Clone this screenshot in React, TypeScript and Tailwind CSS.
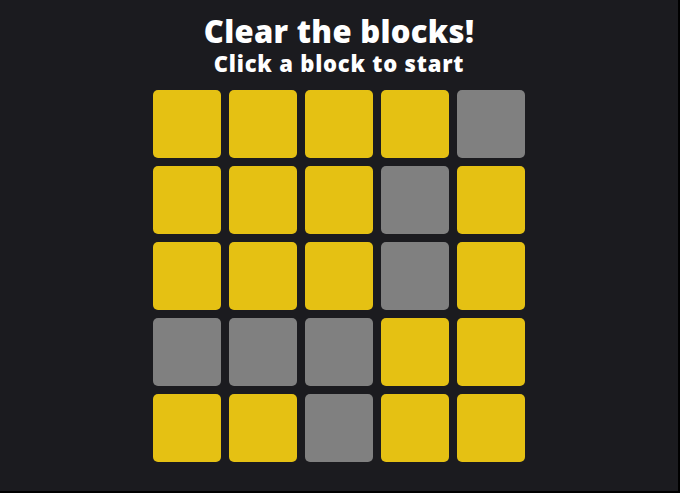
const GRID = [
  'YYYYG',
  'YYYGY',
  'YYYGY',
  'GGGYY',
  'YYGYY',
];

export default function App() {
  return (
    <div className="bg-black w-[680px] h-[493px]">
      <div
        className="w-[678px] h-[491px] bg-[#1b1b1f] flex flex-col items-center text-white"
        style={{ fontFamily: '"Open Sans", "Noto Sans", sans-serif' }}
      >
        <h1 className="mt-[13px] text-[31px] leading-[36px] font-extrabold tracking-[0.3px]">Clear the blocks!</h1>
        <p className="mt-[1px] text-[22px] leading-[27px] font-extrabold tracking-[0.8px]">Click a block to start</p>
        <div className="mt-[13px] grid grid-cols-5 gap-2">
          {GRID.flatMap((row, r) =>
            row.split('').map((c, i) => (
              <button
                key={`${r}-${i}`}
                className={`w-[68px] h-[68px] rounded-[5px] cursor-pointer ${
                  c === 'Y' ? 'bg-[#e5c113]' : 'bg-[#808080]'
                }`}
              />
            ))
          )}
        </div>
      </div>
    </div>
  );
}
